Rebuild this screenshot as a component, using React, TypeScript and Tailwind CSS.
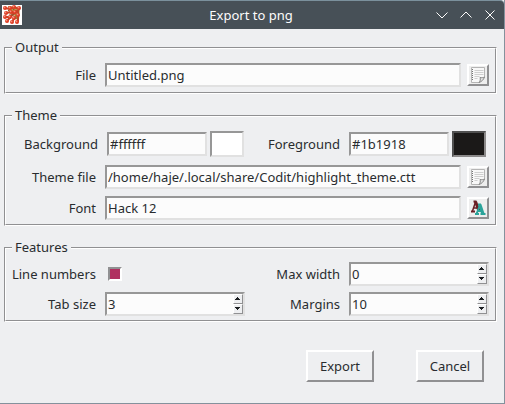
import { useId, useState, type ReactNode } from "react";

const sunken = "border-2 border-t-[#979797] border-l-[#979797] border-b-[#e1e1e1] border-r-[#e1e1e1]";
const raised = "border-2 border-t-white border-l-white border-b-[#909092] border-r-[#909092]";

function Group({ title, children }: { title: string; children: ReactNode }) {
  return (
    <fieldset className="min-w-0">
      <legend className="relative z-10 -mb-[9px] ml-2 h-[18px] bg-[#eeeff1] px-[3px] leading-[18px]">{title}</legend>
      <div className="border border-t-[#909092] border-l-[#909092] border-r-white border-b-white">
        <div className="flex flex-col border border-t-white border-l-white border-r-[#909092] border-b-[#909092] pr-[6px]">
          {children}
        </div>
      </div>
    </fieldset>
  );
}

function TextRow({ label, value, name, children }: { label: string; value: string; name: string; children: ReactNode }) {
  const id = useId();
  const [text, setText] = useState(value);
  return (
    <div className="flex items-center">
      <label htmlFor={id} className="w-[90px] shrink-0 text-right">{label}</label>
      <input id={id} value={text} onChange={(e) => setText(e.target.value)} className={`ml-[9px] h-6 min-w-0 flex-1 bg-[#fcfcfc] px-px outline-none ${sunken}`} />
      <button type="button" aria-label={name} className={`ml-[6px] flex h-[22px] w-[22px] shrink-0 items-center justify-center bg-[#eeeeee] ${raised}`}>
        {children}
      </button>
    </div>
  );
}

function ColorField({ label, value, labelClass, swatchClass }: { label: string; value: string; labelClass: string; swatchClass: string }) {
  const id = useId();
  const [text, setText] = useState(value);
  return (
    <div className="flex items-center">
      <label htmlFor={id} className={`shrink-0 text-right ${labelClass}`}>{label}</label>
      <input id={id} value={text} onChange={(e) => setText(e.target.value)} className={`ml-[9px] h-6 w-[100px] bg-[#fcfcfc] px-px outline-none ${sunken}`} />
      <button type="button" aria-label={`${label} color`} className={`ml-[3px] h-[26px] w-[34px] border-2 ${swatchClass}`} />
    </div>
  );
}

function SpinField({ label, value, labelClass }: { label: string; value: number; labelClass: string }) {
  const id = useId();
  const [n, setN] = useState(value);
  return (
    <div className="flex items-center">
      <label htmlFor={id} className={`shrink-0 text-right ${labelClass}`}>{label}</label>
      <div className={`ml-[9px] flex h-6 w-[140px] bg-[#fcfcfc] ${sunken}`}>
        <input id={id} inputMode="numeric" value={n} onChange={(e) => setN(Number(e.target.value) || 0)} className="min-w-0 flex-1 bg-transparent px-px outline-none" />
        <div className="flex w-[10px] flex-col">
          <button type="button" aria-label={`Increase ${label}`} onClick={() => setN(n + 1)} className="flex h-[10px] items-center justify-center border border-t-white border-l-white border-b-[#909092] border-r-[#909092] bg-[#eeeff1]">
            <svg width="6" height="4" viewBox="0 0 6 4" shapeRendering="crispEdges"><path d="M2 0h1v1h1v1h1v1H0V2h1V1h1z" fill="#1b1e21" /></svg>
          </button>
          <button type="button" aria-label={`Decrease ${label}`} onClick={() => setN(Math.max(0, n - 1))} className="flex h-[10px] items-center justify-center border border-t-white border-l-white border-b-[#909092] border-r-[#909092] bg-[#eeeff1]">
            <svg width="6" height="4" viewBox="0 0 6 4" shapeRendering="crispEdges"><path d="M0 0h5v1H4v1H3v1H2V2H1V1H0z" fill="#1b1e21" /></svg>
          </button>
        </div>
      </div>
    </div>
  );
}

function NoteIcon() {
  return (
    <svg width="16" height="16" viewBox="0 0 16 16" className="shrink-0">
      <path d="M1.5 0.5h13v9.5l-5 5.5h-8z" fill="#f8f8f8" stroke="#b5b5b5" />
      <path d="M2.5 2v12" stroke="#777" strokeDasharray="1 1" />
      <path d="M4.500 3.500h9M4.500 5.500h9M4.500 7.500h9M4.500 9.500h5M4.500 11.500h3" stroke="#cfcfcf" />
      <path d="M14.500 10c-1.500.8-3 .9-4.500.5.6 1.700.4 3.500-1 5 2.600-.8 4.600-2.800 5.500-5.500z" fill="#e6e6e6" stroke="#888888" />
    </svg>
  );
}

function FontIcon() {
  return (
    <svg width="16" height="16" viewBox="0 0 16 16" className="shrink-0" fill="none">
      <path d="M2.500 11L5.500 2M4 8h4" stroke="#6a1f24" strokeWidth="1.500" />
      <path d="M5.500 1.500L9 11" stroke="#6a1f24" strokeWidth="3" />
      <path d="M1 11.500h4M3.500 1.500h3" stroke="#6a1f24" strokeWidth="2" />
      <path d="M6.500 14L10 5M8 11h4" stroke="#2ba39a" strokeWidth="2" />
      <path d="M9.800 4.500L13 14" stroke="#2ba39a" strokeWidth="3.200" />
      <path d="M5 14h4M10.500 14H15.500M8 4.500h3" stroke="#2ba39a" strokeWidth="2" />
    </svg>
  );
}

const beads = [
  [3, 3], [8, 3], [12, 2], [17, 3], [4, 8], [9, 7], [13, 7],
  [16, 10], [3, 12], [8, 12], [12, 13], [5, 16], [10, 17], [15, 17],
];

function AppIcon() {
  return (
    <svg width="20" height="20" viewBox="0 0 20 20" className="shrink-0 bg-white">
      <path d="M6 1l12 1-1 13-4-1-1-5-5-1z" fill="#b99a4c" />
      <path d="M3 3l5 1 4-2 5 2-4 4-4-1-5 1M16 5v12M3 12l5 0 5-4M5 16l6-7M10 17l3-5" stroke="#c2452a" strokeWidth="2" fill="none" />
      <path d="M6 5l3 3M11 4l4 3M7 10l5 0M14 9v5" stroke="#8a5a26" fill="none" />
      {beads.map(([x, y]) => (
        <g key={`${x}-${y}`}>
          <circle cx={x} cy={y} r="2" fill="#dd3a22" />
          <circle cx={x - 0.5} cy={y - 0.6} r="0.900" fill="#f4917c" />
        </g>
      ))}
    </svg>
  );
}

export default function App() {
  const check = useId();
  const [numbers, setNumbers] = useState(true);
  return (
    <div className="min-h-screen border-r border-b border-[#84919c] bg-[#eeeff1] font-['Noto_Sans','Open_Sans',sans-serif] text-[13px] leading-[18px] text-[#292c2f]">
      <header className="flex h-[29px] items-center rounded-tr-[4px] border-t border-[#7b909c] bg-[#475057] pr-2 pl-[2px] text-[#fcfcfc]">
        <AppIcon />
        <h1 className="flex-1 pl-11 text-center">Export to png</h1>
        <div className="flex gap-3">
          <button type="button" aria-label="Minimize" className="flex h-4 w-3 items-center justify-center">
            <svg width="12" height="12" viewBox="0 0 12 12" className="shrink-0" fill="none" stroke="currentColor"><path d="M0.500 3.500L6 9l5.500-5.500" /></svg>
          </button>
          <button type="button" aria-label="Maximize" className="flex h-4 w-3 items-center justify-center">
            <svg width="12" height="12" viewBox="0 0 12 12" className="shrink-0" fill="none" stroke="currentColor"><path d="M0.500 8.500L6 3l5.500 5.500" /></svg>
          </button>
          <button type="button" aria-label="Close" className="flex h-4 w-3 items-center justify-center">
            <svg width="12" height="12" viewBox="0 0 12 12" className="shrink-0" fill="none" stroke="currentColor"><path d="M1.500 1.500l9 9M10.500 1.500l-9 9" /></svg>
          </button>
        </div>
      </header>

      <form className="flex flex-col gap-3 pt-[9px] pr-[7px] pl-1" onSubmit={(e) => e.preventDefault()}>
        <Group title="Output">
          <div className="pt-[14px] pb-[5px]">
            <TextRow label="File" value="Untitled.png" name="Choose output file"><NoteIcon /></TextRow>
          </div>
        </Group>

        <Group title="Theme">
          <div className="flex justify-between pt-[14px] pr-[3px]">
            <ColorField label="Background" value="#ffffff" labelClass="w-[92px]" swatchClass="bg-white border-t-[#979797] border-l-[#979797] border-b-[#e1e1e1] border-r-[#e1e1e1]" />
            <ColorField label="Foreground" value="#1b1918" labelClass="" swatchClass="bg-[#1b1918] border-t-[#505050] border-l-[#505050] border-b-[#8c8a8a] border-r-[#8c8a8a]" />
          </div>
          <div className="flex flex-col gap-[7px] pt-2 pb-1">
            <TextRow label="Theme file" value="/home/haje/.local/share/Codit/highlight_theme.ctt" name="Choose theme file"><NoteIcon /></TextRow>
            <TextRow label="Font" value="Hack 12" name="Choose font"><FontIcon /></TextRow>
          </div>
        </Group>

        <Group title="Features">
          <div className="flex flex-col gap-[6px] pt-[13px] pb-1">
            <div className="flex justify-between">
              <div className="flex items-center">
                <label htmlFor={check} className="w-[90px] text-right">Line numbers</label>
                <input id={check} type="checkbox" checked={numbers} onChange={(e) => setNumbers(e.target.checked)} className="ml-3 h-[14px] w-[14px] appearance-none border-2 border-t-[#909092] border-l-[#909092] border-r-white border-b-white bg-white checked:bg-[#b03060]" />
              </div>
              <SpinField label="Max width" value={0} labelClass="" />
            </div>
            <div className="flex justify-between">
              <SpinField label="Tab size" value={3} labelClass="w-[90px]" />
              <SpinField label="Margins" value={10} labelClass="" />
            </div>
          </div>
        </Group>

        <div className="flex justify-end gap-[42px] pt-4 pr-[13px]">
          <button type="submit" className={`h-8 w-[68px] ${raised}`}>Export</button>
          <button type="button" className={`h-8 w-[68px] ${raised}`}>Cancel</button>
        </div>
      </form>
    </div>
  );
}
